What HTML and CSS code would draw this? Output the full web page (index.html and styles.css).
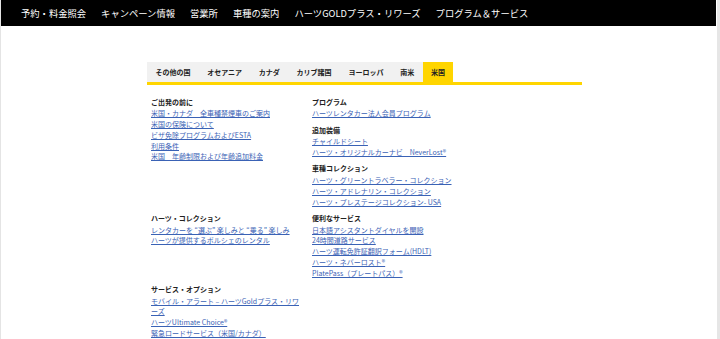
FILE: index.html
```html
<!DOCTYPE html>
<html lang="ja">
<head>
<meta charset="utf-8">
<title>ハーツ</title>
<link rel="stylesheet" href="styles.css">
</head>
<body>
<div class="frame">
  <div class="page">
    <nav class="topnav">
      <a class="topnav-item">予約・料金照会</a>
      <a class="topnav-item">キャンペーン情報</a>
      <a class="topnav-item">営業所</a>
      <a class="topnav-item">車種の案内</a>
      <a class="topnav-item">ハーツGOLDプラス・リワーズ</a>
      <a class="topnav-item">プログラム＆サービス</a>
    </nav>
    <div class="panel">
      <ul class="tabs">
        <li class="tab">その他の国</li>
        <li class="tab">オセアニア</li>
        <li class="tab">カナダ</li>
        <li class="tab">カリブ諸国</li>
        <li class="tab">ヨーロッパ</li>
        <li class="tab">南米</li>
        <li class="tab tab-active">米国</li>
      </ul>
      <div class="grid">
        <div class="col">
          <div class="section">
            <div class="heading">ご出発の前に</div>
            <a class="link">米国・カナダ　全車種禁煙車のご案内</a>
            <a class="link">米国の保険について</a>
            <a class="link">ビザ免除プログラムおよびESTA</a>
            <a class="link">利用条件</a>
            <a class="link">米国　年齢制限および年齢追加料金</a>
          </div>
        </div>
        <div class="col">
          <div class="section">
            <div class="heading">プログラム</div>
            <a class="link">ハーツレンタカー法人会員プログラム</a>
          </div>
          <div class="section">
            <div class="heading">追加装備</div>
            <a class="link">チャイルドシート</a>
            <a class="link">ハーツ・オリジナルカーナビ　NeverLost®</a>
          </div>
          <div class="section">
            <div class="heading">車種コレクション</div>
            <a class="link">ハーツ・グリーントラベラー・コレクション</a>
            <a class="link">ハーツ・アドレナリン・コレクション</a>
            <a class="link">ハーツ・プレステージコレクション- USA</a>
          </div>
        </div>
        <div class="col">
          <div class="section">
            <div class="heading">ハーツ・コレクション</div>
            <a class="link">レンタカーを “選ぶ” 楽しみと “乗る” 楽しみ</a>
            <a class="link">ハーツが提供するポルシェのレンタル</a>
          </div>
        </div>
        <div class="col">
          <div class="section">
            <div class="heading">便利なサービス</div>
            <a class="link">日本語アシスタントダイヤルを開設</a>
            <a class="link">24時間道路サービス</a>
            <a class="link">ハーツ運転免許証翻訳フォーム(HDLT)</a>
            <a class="link">ハーツ・ネバーロスト®</a>
            <a class="link">PlatePass（プレートパス）®</a>
          </div>
        </div>
        <div class="col">
          <div class="section">
            <div class="heading">サービス・オプション</div>
            <a class="link">モバイル・アラート – ハーツGoldプラス・リワーズ</a>
            <a class="link">ハーツUltimate Choice®</a>
            <a class="link">緊急ロードサービス（米国/カナダ）</a>
          </div>
        </div>
      </div>
    </div>
  </div>
  <div class="scroll-track"></div>
</div>
</body>
</html>
```

FILE: styles.css
```css
html, body {
  margin: 0;
  padding: 0;
  background: #ffffff;
  height: 100%;
  overflow: hidden;
}

body {
  font-family: "Noto Sans CJK JP", "Noto Sans", sans-serif;
  color: #222222;
}

.frame {
  display: flex;
  height: 339px;
  border-left: 1px solid #e4e4e4;
}

.page {
  flex: 1;
  min-width: 0;
}

.scroll-track {
  width: 3px;
  margin-left: 1px;
  background: #e6e6e6;
}

.topnav {
  display: flex;
  gap: 15px;
  height: 26px;
  align-items: center;
  background: #000000;
  padding-left: 20px;
}

.topnav-item {
  color: #ffffff;
  font-size: 9.3px;
  line-height: 12px;
  white-space: nowrap;
  text-decoration: none;
}

.panel {
  width: 435px;
  margin: 36px 0 0 146px;
}

.tabs {
  display: flex;
  list-style: none;
  margin: 0;
  padding: 0;
  border-bottom: 3px solid #ffd500;
}

.tab {
  height: 20px;
  line-height: 20px;
  padding: 0 8.4px;
  background: #f1f1f1;
  font-size: 7px;
  font-weight: bold;
  color: #222222;
  white-space: nowrap;
}

.tab-active {
  background: #ffd500;
}

.grid {
  display: grid;
  grid-template-columns: 150px 160px;
  column-gap: 11px;
  padding: 11.5px 0 0 4px;
}

.section {
  margin-bottom: 5.5px;
}

.heading {
  font-size: 7px;
  font-weight: bold;
  line-height: 10.75px;
  margin-bottom: 1px;
  color: #222222;
}

.link {
  display: block;
  font-size: 7px;
  line-height: 10.75px;
  color: #3a62b5;
  text-decoration: underline;
  text-underline-offset: 1px;
}
```
